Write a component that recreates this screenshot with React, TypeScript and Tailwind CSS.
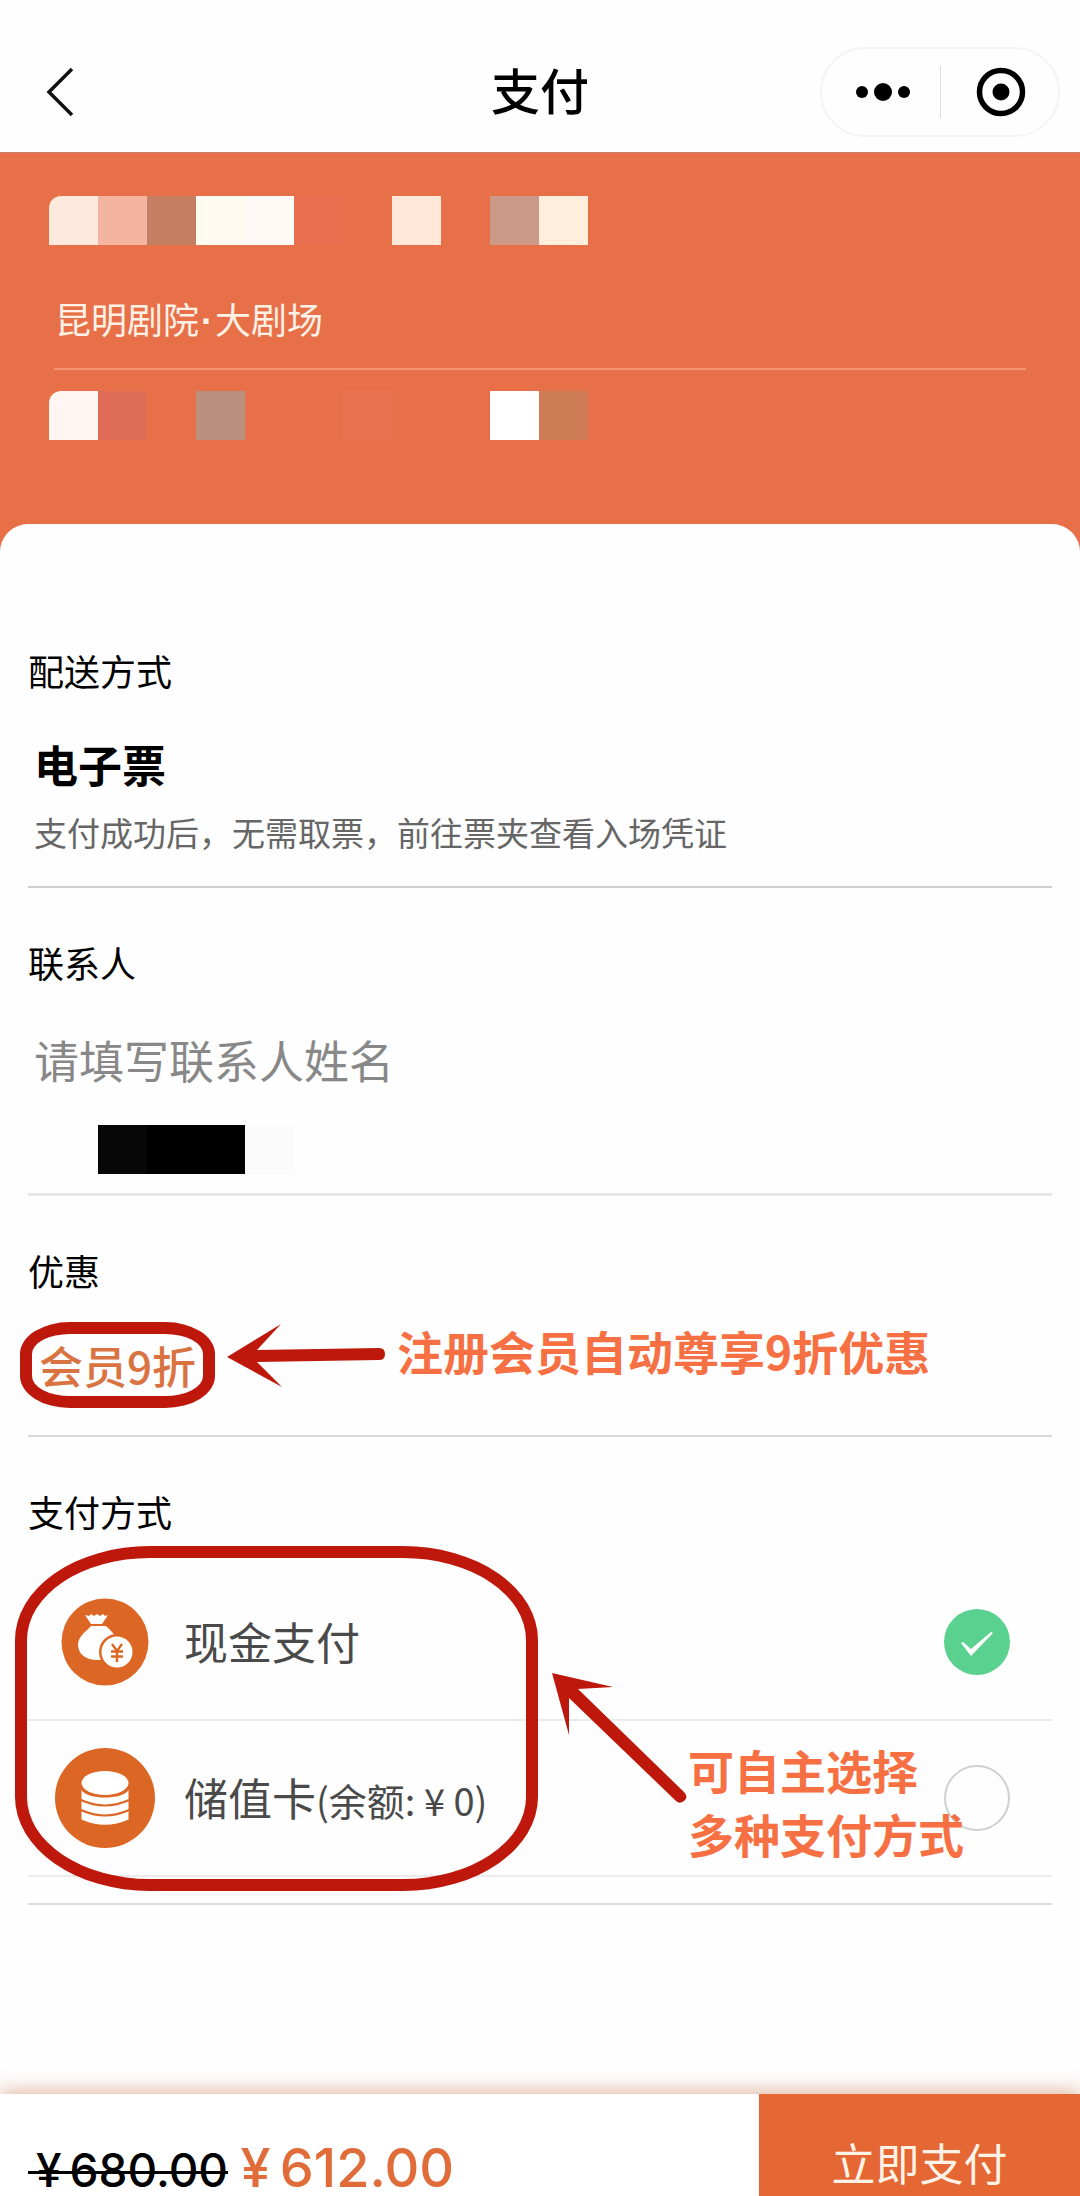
import { useState } from 'react';

const venueMosaic = [
  'bg-[#fee9dd]', 'bg-[#f4b5a0]', 'bg-[#c47f62]', 'bg-[#fffbf0]', 'bg-[#fffaf5]', 'bg-[#e76f50]',
  '', 'bg-[#ffe8d8]', '', 'bg-[#cc9888]', 'bg-[#ffeedb]',
];

const seatMosaic = [
  'bg-[#fff6f4]', 'bg-[#e06d57]', '', 'bg-[#bb9081]', '', '', 'bg-[#e8724d]',
  '', '', 'bg-white', 'bg-[#cc7b54]',
];

const Mosaic = ({ cells }: { cells: string[] }) => (
  <div className="flex h-[49px]" aria-hidden="true">
    {cells.map((color, index) => (
      <span key={index} className={`w-[49px] ${index === 0 ? 'rounded-tl-xl' : ''} ${color}`} />
    ))}
  </div>
);

const CashIcon = () => (
  <svg viewBox="0 0 88 88" className="w-[88px] h-[88px]" aria-hidden="true">
    <circle cx="44" cy="44" r="43.5" fill="#dc6724" />
    <path d="M24 17l4 1 2-2 3 2 3-2 3 2 3-2 2 2 3-1-6 9H30z" fill="#fff" />
    <path d="M30 28h15c4 4 8 7 10 12 0 14-5 22-18 22C24 62 17 56 17 46c1-9 9-13 13-18z" fill="#fff" />
    <circle cx="56" cy="54" r="18" fill="#dc6724" />
    <circle cx="56" cy="54" r="15.5" fill="#fff" />
    <path d="M51 46l5 7 5-7M50 53.500h12M50 58.500h12M56 53v11" fill="none" stroke="#dc6724" strokeWidth="2.4" />
  </svg>
);

const CardIcon = () => (
  <svg viewBox="0 0 100 100" className="w-[100px] h-[100px]" aria-hidden="true">
    <circle cx="50" cy="50" r="50" fill="#dc6724" />
    <path d="M26.500 42C32 52 68 52 73.500 42v29.500Q50 82 26.500 71.500z" fill="#fff" />
    <ellipse cx="50" cy="35" rx="23.500" ry="12" fill="#fff" />
    <path d="M26 52q24 11 48 0M26 62q24 11 48 0" fill="none" stroke="#dc6724" strokeWidth="2" />
  </svg>
);

const methods = [
  { id: 'cash', label: '现金支付', note: '', icon: CashIcon },
  { id: 'card', label: '储值卡', note: '(余额: ¥ 0)', icon: CardIcon },
];

const App = () => {
  const [method, setMethod] = useState('cash');

  return (
    <div className="min-h-[2196px] flex flex-col bg-[#fefefe] text-black font-['Noto_Sans_CJK_SC',sans-serif]">
      <header className="h-[152px] pt-[31px] px-5 grid grid-cols-[1fr_auto_1fr] items-center">
        <button aria-label="返回" className="ml-4 w-12">
          <svg viewBox="0 0 48 56" className="w-12 h-14" fill="none" stroke="#111" strokeWidth="3.5">
            <path d="M36 5L13 28l23 23" />
          </svg>
        </button>
        <h1 className="pb-[6px] text-[49px] leading-[60px] font-medium">支付</h1>
        <div className="justify-self-end flex w-[240px] h-[90px] rounded-full border-2 border-[#f4f4f4] items-center">
          <button aria-label="更多" className="flex-1 flex justify-center items-center gap-[6px] pl-1">
            <span className="size-3 rounded-full bg-black" />
            <span className="size-[18px] rounded-full bg-black" />
            <span className="size-3 rounded-full bg-black" />
          </button>
          <span className="w-px h-[52px] bg-[#dedede]" />
          <button aria-label="关闭" className="flex-1 flex justify-center pl-1">
            <svg viewBox="0 0 50 50" className="size-[50px]">
              <circle cx="25" cy="25" r="21.5" fill="none" stroke="#000" strokeWidth="5.5" />
              <circle cx="25" cy="25" r="8.5" />
            </svg>
          </button>
        </div>
      </header>

      <section className="h-[402px] bg-[#e87049] border-t border-[#c4806a] pt-[43px] px-[49px]">
        <Mosaic cells={venueMosaic} />
        <p className="mt-[47px] px-[6px] text-[36px] leading-[52px] text-[#fff1e6]">
          昆明剧院<span className="font-['Liberation_Sans'] font-bold px-[2px]">·</span>大剧场
        </p>
        <div className="mt-5 mx-[5px] h-[2px] bg-[#f39570]" />
        <div className="mt-[21px]">
          <Mosaic cells={seatMosaic} />
        </div>
      </section>

      <main className="relative flex-1 -mt-[30px] rounded-t-[28px] bg-[#fefefe] px-7 pt-[120px]">
        <section className="h-[244px] border-b-2 border-[#cfcfcf]">
          <h2 className="text-[36px] leading-[52px]">配送方式</h2>
          <p className="mt-9 px-[6px] text-[44px] leading-[64px] font-bold">电子票</p>
          <p className="mt-3 px-[6px] text-[33px] leading-[48px] text-[#666]">支付成功后，无需取票，前往票夹查看入场凭证</p>
        </section>

        <section className="h-[308px] pt-[48px] border-b-[3px] border-[#e6e6e6]">
          <h2 className="text-[36px] leading-[52px]"><label htmlFor="contact">联系人</label></h2>
          <input
            id="contact"
            placeholder="请填写联系人姓名"
            className="block mt-[34px] px-[6px] w-full h-[74px] text-[45px] placeholder:text-[#888] outline-none"
          />
          <div className="mt-[29px] ml-[70px] flex h-[49px]" aria-hidden="true">
            <span className="w-[49px] bg-[#070707]" />
            <span className="w-[98px] bg-black" />
            <span className="w-[49px] bg-[#fbfbfb]" />
          </div>
        </section>

        <section className="relative h-[241px] pt-[48px] border-b-2 border-[#d9d9d9]">
          <h2 className="text-[36px] leading-[52px]">优惠</h2>
          <div className="-ml-2 mt-[26px] flex items-start">
            <span className="w-[195px] h-[86px] flex justify-center items-center border-[12px] border-[#be180c] rounded-[50px/32px] text-[44px] leading-[60px] font-medium text-[#d97342] whitespace-nowrap">
              会员9折
            </span>
            <svg viewBox="0 0 160 64" className="ml-3 mt-[2px] w-[160px] h-16" fill="#be180c" aria-hidden="true">
              <path d="M0 33L54 0 30 26 152 24q6 0 6 6t-6 6L30 38 55 63z" />
            </svg>
            <strong className="ml-[10px] -mt-1 text-[46px] leading-[64px] text-[#f77043] whitespace-nowrap">注册会员自动尊享9折优惠</strong>
          </div>
        </section>

        <fieldset className="relative h-[468px] border-b-2 border-[#dcdcdc]">
          <legend className="float-left w-full pt-[48px] text-[36px] leading-[52px]">支付方式</legend>
          <div className="clear-both pt-[28px]">
            {methods.map(({ id, label, note, icon: Icon }) => (
              <label
                key={id}
                className="flex items-center gap-[2px] h-[156px] border-b-2 border-[#ebebeb] pr-[42px]"
              >
                <span className="w-[154px] flex justify-center"><Icon /></span>
                <span className="text-[44px] leading-[64px] text-[#4a4a4a]">
                  {label}<span className="text-[38px]">{note}</span>
                </span>
                <span className="relative ml-auto size-[66px]">
                  <input
                    type="radio"
                    name="method"
                    value={id}
                    checked={method === id}
                    onChange={() => setMethod(id)}
                    className="peer block appearance-none size-[66px] rounded-full border-2 border-[#d0d0d0] checked:border-0 checked:bg-[#5ad18f]"
                  />
                  <svg viewBox="0 0 66 66" className="hidden peer-checked:block absolute inset-0" fill="#fff">
                    <path d="M17 34l2-1 8 7 20-17 2 1-22 23z" />
                  </svg>
                </span>
              </label>
            ))}
          </div>

          {/* Callout over the two payment methods */}
          <div className="absolute left-[-13px] top-[109px] w-[523px] h-[345px] border-[12px] border-[#be180c] rounded-[135px/94px] pointer-events-none" />
          <div className="absolute left-[524px] top-[236px] flex pointer-events-none">
            <svg viewBox="0 0 136 130" className="w-[136px] h-[130px]" fill="#be180c" aria-hidden="true">
              <path d="M0 0L61 14 26 16 132 119q5 5 0 9t-9-1L17 25V62z" />
            </svg>
            <strong className="mt-[64px] text-[46px] leading-[64px] text-[#f77043] whitespace-nowrap">
              可自主选择<br />多种支付方式
            </strong>
          </div>
        </fieldset>
      </main>

      <footer className="relative h-[102px] flex bg-white shadow-[0_-4px_18px_rgba(190,90,40,0.4)]">
        <div className="flex-1 pl-7 pt-[41px] flex items-baseline gap-[3px] leading-[66px] font-medium whitespace-nowrap font-['Inter',sans-serif]">
          <del className="text-[46px] decoration-[3px]">{'\u2009¥\u2009680.00'}</del>
          <span className="text-[54px] text-[#e06c3a]">{'\u2009¥\u2009612.00'}</span>
        </div>
        <button className="w-[321px] pt-[34px] bg-[#e56733] text-[44px] leading-[66px] text-[#fff3e8]">立即支付</button>
      </footer>
    </div>
  );
};

export default App;
